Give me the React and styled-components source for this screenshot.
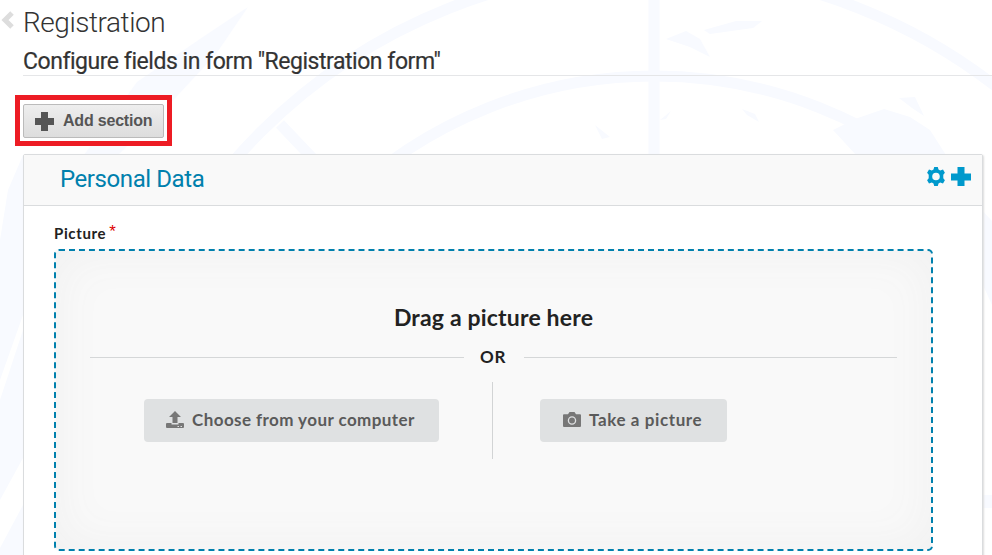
import React from 'react'
import styled, { createGlobalStyle } from 'styled-components';

const GlobalStyle = createGlobalStyle`
  * {
    box-sizing: border-box;
  }

  body {
    margin: 0;
    background-color: #fff;
    overflow: hidden;
  }
`

const Page = styled.div`
  position: relative;
  height: 555px;
  overflow: hidden;
  color: #333;
  font-family: Roboto, sans-serif;
`

const Backdrop = styled.svg`
  position: absolute;
  top: 0;
  left: 0;
  z-index: -1;
`

const Header = styled.header`
  display: grid;
  grid-template-columns: 23px 1fr;
  height: 76px;
`

const BackLink = styled.a`
  padding: 11px 0 0 1px;
  line-height: 0;
`

const Titles = styled.div`
  height: 76px;
  border-bottom: 1px solid #e5e6e8;
`

const Title = styled.h1`
  margin: 0;
  height: 45px;
  font-size: 28px;
  font-weight: 300;
  line-height: 45px;
  letter-spacing: -0.45px;
`

const SubTitle = styled.h2`
  margin: 0;
  height: 30px;
  font-size: 23px;
  font-weight: 400;
  line-height: 33px;
  letter-spacing: -0.46px;
  -webkit-text-stroke: 0.2px #333;
`

const Highlight = styled.div`
  width: 157px;
  height: 51px;
  margin: 19px 0 8px 15px;
  padding: 4px 3px;
  background-color: #fff;
  border: 5px solid #ed1c24;
`

const AddButton = styled.button`
  display: flex;
  align-items: center;
  gap: 8px;
  width: 141px;
  height: 34px;
  padding: 0 0 0 11px;
  background: linear-gradient(#eee, #ddd);
  border: 1px solid #bbb;
  border-radius: 2px;
  color: #555;
  font-family: "Liberation Sans", sans-serif;
  font-size: 16px;
  font-weight: bold;
  letter-spacing: -0.2px;
`

const Section = styled.section`
  width: 960px;
  height: 420px;
  margin-left: 23px;
  background-color: #fff;
  border: 1px solid #dadcde;
  border-radius: 2px;
  box-shadow: 1px 1px 2px #ddd;
`

const SectionHeader = styled.div`
  display: flex;
  justify-content: space-between;
  height: 51px;
  padding: 0 11px 0 36px;
  background-color: #f9f9f9;
  border-bottom: 1px solid #dadcde;
`

const SectionTitle = styled.h3`
  margin: 0;
  color: #0080ad;
  font-size: 24px;
  font-weight: 400;
  line-height: 49px;
  letter-spacing: -0.42px;
`

const Actions = styled.div`
  display: flex;
  gap: 5px;
  padding-top: 12px;
`

const Field = styled.div`
  padding: 18px 0 0 30px;
  font-family: Lato, sans-serif;
`

const Label = styled.label`
  display: flex;
  height: 25px;
  color: #222;
  font-size: 15px;
  font-weight: 700;
  line-height: 18px;
  letter-spacing: 0.65px;
`

const Required = styled.span`
  margin: -1px 0 0 3px;
  color: #d00;
  font-family: "Liberation Sans", sans-serif;
  font-size: 17px;
  font-weight: 400;
`

const DropZone = styled.div`
  width: 879px;
  height: 302px;
  padding: 51px 34px 0;
  background-color: #f9f9f9;
  border: 2px dashed #0080ad;
  border-radius: 5px;
  box-shadow: inset 0 0 50px #f0f0f0;
`

const DropText = styled.div`
  color: #222;
  font-size: 23px;
  font-weight: 700;
  line-height: 30px;
  letter-spacing: 0.18px;
  text-align: center;
`

const Separator = styled.div`
  display: grid;
  grid-template-columns: 374px 60px 373px;
  align-items: center;
  height: 24px;
  margin-top: 13px;
  color: #222;
  font-size: 17px;
  font-weight: 700;
  letter-spacing: 0.6px;
  text-align: center;
`

const Or = styled.span`
  padding: 0 2px 2px 0;
`

const Rule = styled.span`
  height: 1px;
  background-color: #d5d7d8;
`

const Choices = styled.div`
  display: grid;
  grid-template-columns: 402px 1px 1fr;
  height: 77px;
  margin-top: 13px;
`

const Divider = styled.span`
  background-color: #d2d4d5;
`

const Choice = styled.div`
  padding: 17px 0 0 ${props => props.$left}px;
`

const ChoiceButton = styled.button`
  display: flex;
  align-items: center;
  gap: 8px;
  width: ${props => props.$width}px;
  height: 43px;
  padding: 0 0 1px ${props => props.$indent}px;
  background-color: #dfe1e2;
  border: 0;
  border-radius: 4px;
  color: #5a5a5a;
  font-family: Lato, sans-serif;
  font-size: 17px;
  font-weight: 700;
  letter-spacing: ${props => props.$spacing}px;
  white-space: nowrap;
`

const ChoiceText = styled.span`
  padding-bottom: 2px;
`

const PlusIcon = () => (
  <svg width="20" height="20" viewBox="0 0 20 20" fill="currentColor">
    <path d="M6 1h7v6h6v7h-6v6H6v-6H0V7h6z" />
  </svg>
)

const GearIcon = () => (
  <svg width="20" height="20" viewBox="0 0 20 20">
    <path
      fill="#0099cc" fillRule="evenodd"
      d="M8.200 0h3.600l.7 2.400 1.700 1 2.800-.9 1.900 3.300-1.600 2v3.400l1.600 2-1.900 3.300-2.800-.9-1.700 1-.7 2.400H8.200l-.7-2.400-1.700-1-2.800.9-1.900-3.300 1.600-2V7.800L1.100 5.800 3 2.500l2.800.9 1.700-1zM10 5.700a3.800 3.800 0 1 0 0 7.600 3.800 3.800 0 0 0 0-7.600z"
    />
  </svg>
)

const UploadIcon = () => (
  <svg width="18" height="18" viewBox="0 0 18 18" fill="#777">
    <path d="M9 0l6 6h-3.500v6h-5V6H3z" />
    <path fillRule="evenodd" d="M1 12h4.500v1.500h7V12H17q1 0 1 1v3q0 1-1 1H1q-1 0-1-1v-3q0-1 1-1zM11.500 15v1H13v-1zM14.500 15v1H16v-1z" />
  </svg>
)

const CameraIcon = () => (
  <svg width="18" height="18" viewBox="0 0 18 18">
    <path fill="#777" d="M1 3.200h4L6.500 1h5L13 3.200h4q1 0 1 1V15q0 1-1 1H1q-1 0-1-1V4.200q0-1 1-1z" />
    <circle cx="9" cy="9.500" r="3.600" fill="#777" stroke="#dfe1e2" strokeWidth="1.300" />
  </svg>
)

// faint globe lines behind the page
const Globe = () => (
  <Backdrop width="992" height="555" viewBox="0 0 992 555" fill="#f8faff">
    <g fill="none" stroke="#f8faff" strokeWidth="11">
      <circle cx="654" cy="525" r="449" />
      <circle cx="654" cy="525" r="556" />
      <path d="M654 0V155M280 124l38 40" />
    </g>
    <path d="M248 7L216 54 165 109 118 155H84l53-73 63-43z" />
    <path d="M42 140L23 155 8 190 0 240V380L23 315V155zM23 330L0 400V500L23 458zM23 505L0 548V555H23zM983 220l9 5v80l-9-20zM983 495h9v13h-9z" />
    <path d="M666 39l20-8 14 8 10 18-10-5-10-5zM704 30l32-9h26l-9 7-43 6z" />
    <path d="M833 130l22-11 29-10 26 8 20 13 16 25h-90zM899 98l16-1 9 19-12-8zM595 125l15 12-8 2zM742 109l13 5 4 8-12-7zM660 120l11-9-5 8z" />
  </Backdrop>
)

const App = () => {
  return (
    <Page>
      <GlobalStyle />
      <Globe />
      <Header>
        <BackLink>
          <svg width="13" height="18" viewBox="0 0 13 18">
            <path d="M11 2L4 9l7 7" fill="none" stroke="#ddd" strokeWidth="5" />
          </svg>
        </BackLink>
        <Titles>
          <Title>Registration</Title>
          <SubTitle>Configure fields in form "Registration form"</SubTitle>
        </Titles>
      </Header>
      <Highlight>
        <AddButton><PlusIcon />Add section</AddButton>
      </Highlight>
      <Section>
        <SectionHeader>
          <SectionTitle>Personal Data</SectionTitle>
          <Actions>
            <GearIcon />
            <svg width="20" height="20" viewBox="0 0 20 20">
              <path fill="#0099cc" d="M6.500 0h7v6.500H20v7h-6.500V19h-7v-5.500H0v-7h6.500z" />
            </svg>
          </Actions>
        </SectionHeader>
        <Field>
          <Label>Picture<Required>*</Required></Label>
          <DropZone>
            <DropText>Drag a picture here</DropText>
            <Separator><Rule /><Or>OR</Or><Rule /></Separator>
            <Choices>
              <Choice $left={54}>
                <ChoiceButton $width={295} $indent={22} $spacing={0.43}>
                  <UploadIcon />
                  <ChoiceText>Choose from your computer</ChoiceText>
                </ChoiceButton>
              </Choice>
              <Divider />
              <Choice $left={47}>
                <ChoiceButton $width={187} $indent={23} $spacing={0.6}>
                  <CameraIcon />
                  <ChoiceText>Take a picture</ChoiceText>
                </ChoiceButton>
              </Choice>
            </Choices>
          </DropZone>
        </Field>
      </Section>
    </Page>
  )
}

export default App
